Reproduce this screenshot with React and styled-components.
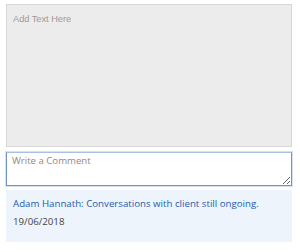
import React from 'react';
import styled, { createGlobalStyle } from 'styled-components';

const GlobalStyle = createGlobalStyle`
  html, body {
    margin: 0;
    padding: 0;
    background: #ffffff;
  }
`;

const Wrapper = styled.div`
  display: flex;
  flex-direction: column;
  gap: 4px;
  width: 286px;
  padding: 4px 0 0 6px;
`;

const NoteArea = styled.textarea`
  box-sizing: border-box;
  width: 100%;
  height: 143px;
  margin: 0;
  padding: 9px 6px;
  background: #ececec;
  border: 1px solid #d8d8d8;
  border-radius: 0;
  resize: none;
  font-family: "Liberation Sans", Arial, sans-serif;
  font-size: 9.2px;
  color: #555;
  outline: none;

  &::placeholder {
    color: #9a9a9a;
  }
`;

const CommentArea = styled.textarea`
  box-sizing: border-box;
  display: block;
  width: 100%;
  height: 34px;
  margin: 1px 0 0;
  padding: 1px 5px;
  background: #ffffff;
  border: 1px solid #6f94cb;
  border-top-color: #a8c0e2;
  box-shadow: 0 0 0 1px rgba(140, 170, 215, 0.35);
  border-radius: 0;
  resize: vertical;
  font-family: "Open Sans", sans-serif;
  font-size: 9.6px;
  color: #333;
  outline: none;

  &::placeholder {
    color: #8a8a8a;
  }
`;

const CommentCard = styled.div`
  display: flex;
  flex-direction: column;
  gap: 5px;
  box-sizing: border-box;
  height: 52px;
  padding: 7px 7px;
  background: #eef4fb;
  font-family: "Open Sans", sans-serif;
  font-size: 9.7px;
`;

const CommentText = styled.div`
  color: #1d5cad;
  line-height: 13px;
`;

const CommentDate = styled.div`
  color: #444;
  line-height: 13px;
`;

export default function App() {
  return (
    <>
      <GlobalStyle />
      <Wrapper>
        <NoteArea placeholder="Add Text Here" />
        <CommentArea placeholder="Write a Comment" />
        <CommentCard>
          <CommentText>Adam Hannath: Conversations with client still ongoing.</CommentText>
          <CommentDate>19/06/2018</CommentDate>
        </CommentCard>
      </Wrapper>
    </>
  );
}
